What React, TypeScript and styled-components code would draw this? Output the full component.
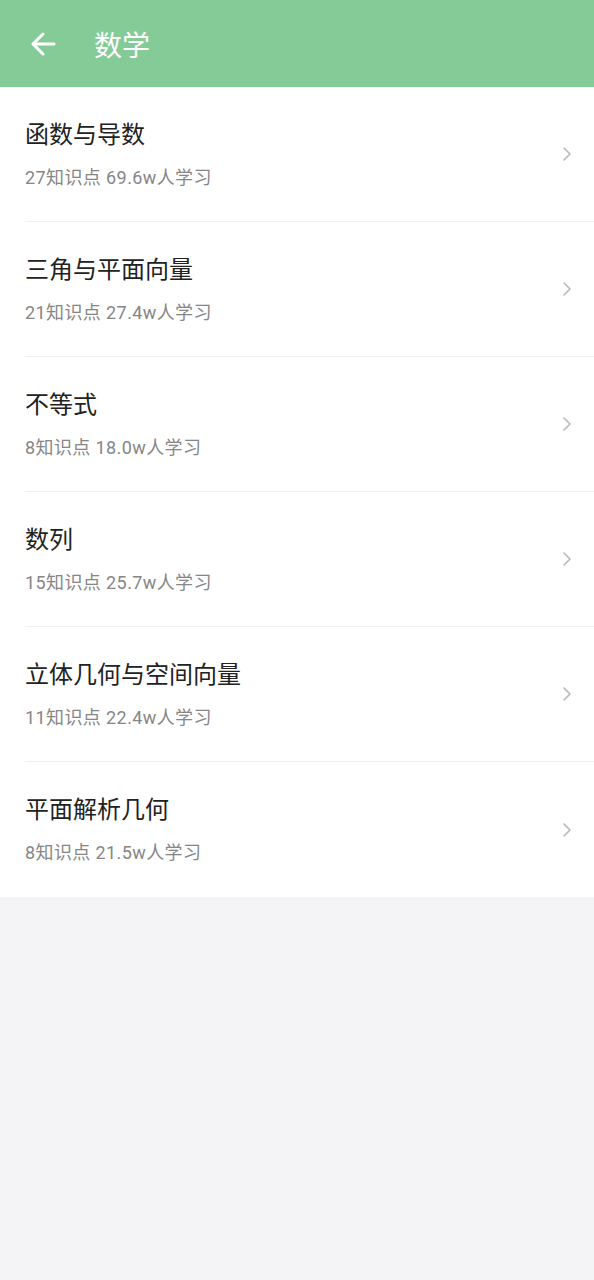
import * as React from "react";
import styled, { createGlobalStyle } from "styled-components";

const GlobalStyle = createGlobalStyle`
  html, body {
    margin: 0;
    padding: 0;
    background: #f4f4f6;
    font-family: Roboto, "Noto Sans CJK SC", "Noto Sans", sans-serif;
  }
`;

const SPage = styled.div`
  min-height: 1280px;
  background: #f4f4f6;
`;

const SHeader = styled.div`
  height: 87px;
  background: #84cb98;
  display: flex;
  align-items: center;
  padding: 0 0 0 28px;
  box-sizing: border-box;
`;

const SBack = styled.div`
  width: 30px;
  height: 30px;
  display: flex;
  align-items: center;
  justify-content: center;
  margin-right: 36px;
`;

const STitle = styled.h1`
  margin: 0;
  color: #fff;
  font-size: 28px;
  font-weight: 400;
`;

const SList = styled.div`
  background: #fff;
`;

const SRow = styled.div`
  height: 135px;
  box-sizing: border-box;
  margin-left: 25px;
  padding-right: 22px;
  display: flex;
  align-items: center;
  justify-content: space-between;
  border-bottom: 1px solid #f0f0f0;
  &:last-child {
    border-bottom: none;
  }
`;

const SInfo = styled.div`
  display: flex;
  flex-direction: column;
`;

const SName = styled.p`
  margin: 0;
  font-size: 24px;
  line-height: 32px;
  color: #222;
`;

const SMeta = styled.p`
  margin: 15px 0 0;
  font-size: 18px;
  line-height: 24px;
  letter-spacing: 0.4px;
  color: #868686;
`;

interface ITopic {
  name: string;
  points: number;
  learners: string;
}

const topics: ITopic[] = [
  { name: "函数与导数", points: 27, learners: "69.6w" },
  { name: "三角与平面向量", points: 21, learners: "27.4w" },
  { name: "不等式", points: 8, learners: "18.0w" },
  { name: "数列", points: 15, learners: "25.7w" },
  { name: "立体几何与空间向量", points: 11, learners: "22.4w" },
  { name: "平面解析几何", points: 8, learners: "21.5w" },
];

const App = () => (
  <SPage>
    <GlobalStyle />
    <SHeader>
      <SBack>
        <svg width="28" height="28" viewBox="0 0 28 28" fill="none">
          <path
            d="M25 14H4M14 4L4 14l10 10"
            stroke="#fff"
            strokeWidth="3"
            strokeLinecap="round"
            strokeLinejoin="round"
          />
        </svg>
      </SBack>
      <STitle>数学</STitle>
    </SHeader>
    <SList>
      {topics.map((t) => (
        <SRow key={t.name}>
          <SInfo>
            <SName>{t.name}</SName>
            <SMeta>{`${t.points}知识点 ${t.learners}人学习`}</SMeta>
          </SInfo>
          <svg width="10" height="16" viewBox="0 0 10 16" fill="none">
            <path d="M2 2l6 6-6 6" stroke="#b8b8b8" strokeWidth="1.6" strokeLinecap="round" strokeLinejoin="round" />
          </svg>
        </SRow>
      ))}
    </SList>
  </SPage>
);

export default App;
